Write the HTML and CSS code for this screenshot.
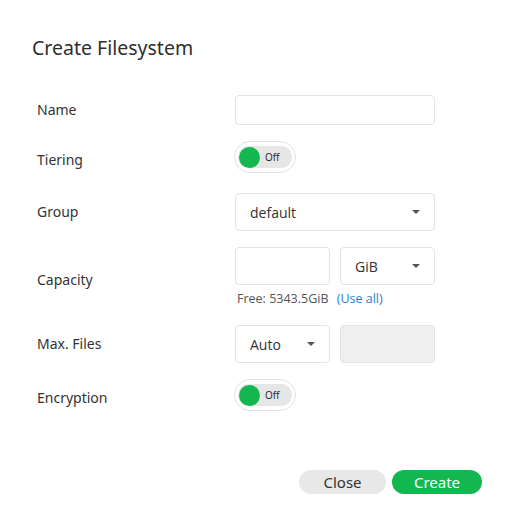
FILE: index.html
```html
<!DOCTYPE html>
<html>
<head>
<meta charset="utf-8">
<link rel="stylesheet" href="styles.css">
</head>
<body>
<div class="dialog">
  <h1 class="title">Create Filesystem</h1>
  <div class="form">
    <div class="label row-name">Name</div>
    <div class="ctrl row-name"><div class="input wide short"></div></div>

    <div class="label row-tier">Tiering</div>
    <div class="ctrl row-tier toggle-cell">
      <div class="toggle"><div class="track"><span class="knob"></span><span class="off">Off</span></div></div>
    </div>

    <div class="label row-group">Group</div>
    <div class="ctrl row-group"><div class="input wide select"><span>default</span><span class="caret"></span></div></div>

    <div class="label row-cap">Capacity</div>
    <div class="ctrl row-cap">
      <div class="pair">
        <div class="input half"></div>
        <div class="input half select"><span>GiB</span><span class="caret"></span></div>
      </div>
      <div class="free">Free: 5343.5GiB <a class="useall">(Use all)</a></div>
    </div>

    <div class="label row-max">Max. Files</div>
    <div class="ctrl row-max">
      <div class="pair">
        <div class="input half select"><span>Auto</span><span class="caret"></span></div>
        <div class="input half disabled"></div>
      </div>
    </div>

    <div class="label row-enc">Encryption</div>
    <div class="ctrl row-enc toggle-cell">
      <div class="toggle"><div class="track"><span class="knob"></span><span class="off">Off</span></div></div>
    </div>
  </div>
  <div class="actions">
    <button class="btn close">Close</button>
    <button class="btn create">Create</button>
  </div>
</div>
</body>
</html>
```

FILE: styles.css
```css
html, body {
  margin: 0;
  padding: 0;
  background: #ffffff;
}
.dialog {
  width: 516px;
  height: 528px;
  box-sizing: border-box;
  padding: 35px 34px 0 32px;
  font-family: "Noto Sans", "Open Sans", sans-serif;
  color: #333333;
}
.title {
  margin: 0;
  font-size: 19.5px;
  font-weight: 400;
  line-height: 26px;
  color: #2e2e2e;
}
.form {
  margin-top: 34px;
  margin-left: 5px;
  display: grid;
  grid-template-columns: 198px 200px;
  align-items: center;
}
.label {
  font-size: 14px;
  line-height: 20px;
  color: #333;
}
.row-tier, .row-group, .row-cap { margin-top: 16px; }
.row-max { margin-top: 18px; }
.row-enc { margin-top: 16px; }
.label.row-cap { position: relative; top: 3px; }
.toggle-cell { height: 36px; display: flex; align-items: flex-start; }
.label.row-tier, .label.row-enc { position: relative; top: 1px; }
.input {
  box-sizing: border-box;
  border: 1px solid #e2e2e2;
  border-radius: 4px;
  height: 38px;
  background: #fff;
  font-family: "Open Sans", sans-serif;
  font-size: 14px;
  color: #333;
}
.input.short { height: 30px; }
.wide { width: 200px; }
.half { width: 95px; }
.pair { display: flex; gap: 10px; }
.select {
  display: flex;
  align-items: center;
  justify-content: space-between;
  padding: 0 14px 0 14px;
}
.caret {
  width: 0;
  height: 0;
  border-left: 4px solid transparent;
  border-right: 4px solid transparent;
  border-top: 4px solid #555;
}
.disabled { background: #f0f0f0; }
.free {
  margin-top: 5px;
  font-family: "Open Sans", sans-serif;
  font-size: 12.5px;
  line-height: 17px;
  color: #555;
  padding-left: 2px;
}
.useall { color: #2a7fcf; margin-left: 5px; }
.toggle {
  box-sizing: border-box;
  width: 62px;
  height: 32px;
  border: 1px solid #e2e2e2;
  border-radius: 16px;
  background: #fff;
  padding: 4px 3px;
  margin-left: -1px;
}
.track {
  height: 22px;
  border-radius: 11px;
  background: #e6e6e6;
  display: flex;
  align-items: center;
  gap: 5px;
}
.knob {
  width: 21px;
  height: 21px;
  border-radius: 50%;
  background: #12b84f;
  margin-left: 1px;
}
.off {
  font-family: "Open Sans", sans-serif;
  font-size: 10px;
  color: #222;
}
.actions {
  margin-top: 55px;
  display: flex;
  justify-content: flex-end;
  gap: 6px;
}
.btn {
  border: none;
  height: 24px;
  border-radius: 12px;
  font-family: "Noto Sans", sans-serif;
  font-size: 15px;
  line-height: 24px;
  padding: 0;
  cursor: pointer;
}
.close { width: 87px; background: #e8e8e8; color: #333; }
.create { width: 90px; background: #12b84f; color: #fff; }
```
